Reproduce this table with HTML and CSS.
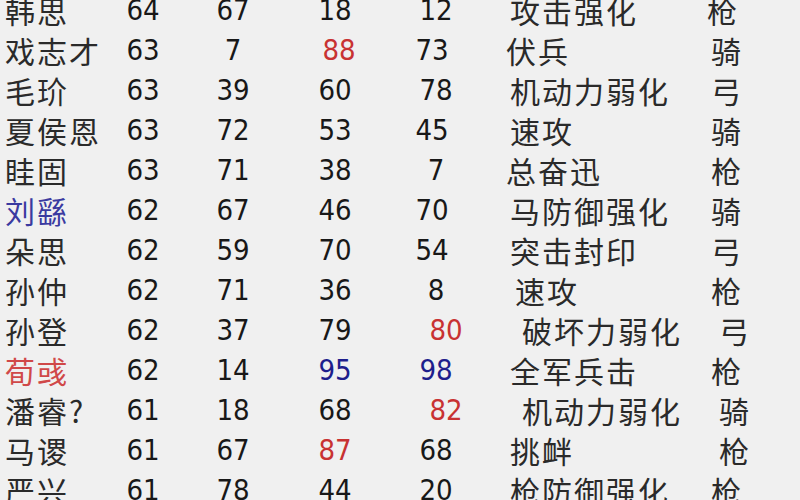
FILE: index.html
```html
<!DOCTYPE html>
<html lang="zh">
<head>
<meta charset="utf-8">
<title>武将一览</title>
<link rel="stylesheet" href="styles.css">
</head>
<body>
<div class="table">
  <div class="row"><span class="name">韩思</span><span class="n c2">64</span><span class="n c3">67</span><span class="n c4">18</span><span class="n c5">12</span><span class="skill">攻击强化</span><span class="type">枪</span></div>
  <div class="row"><span class="name">戏志才</span><span class="n c2">63</span><span class="n c3">7</span><span class="n c4 red sr">88</span><span class="n c5 sl">73</span><span class="skill sk-l">伏兵</span><span class="type t1">骑</span></div>
  <div class="row"><span class="name">毛玠</span><span class="n c2">63</span><span class="n c3">39</span><span class="n c4">60</span><span class="n c5">78</span><span class="skill">机动力弱化</span><span class="type t1">弓</span></div>
  <div class="row"><span class="name">夏侯恩</span><span class="n c2">63</span><span class="n c3">72</span><span class="n c4">53</span><span class="n c5 sl">45</span><span class="skill">速攻</span><span class="type t1">骑</span></div>
  <div class="row"><span class="name">眭固</span><span class="n c2">63</span><span class="n c3">71</span><span class="n c4">38</span><span class="n c5">7</span><span class="skill sk-l">总奋迅</span><span class="type t1">枪</span></div>
  <div class="row"><span class="name blue-name">刘繇</span><span class="n c2">62</span><span class="n c3">67</span><span class="n c4">46</span><span class="n c5 sl">70</span><span class="skill">马防御强化</span><span class="type t1">骑</span></div>
  <div class="row"><span class="name">朵思</span><span class="n c2">62</span><span class="n c3">59</span><span class="n c4">70</span><span class="n c5 sl">54</span><span class="skill">突击封印</span><span class="type t1">弓</span></div>
  <div class="row"><span class="name">孙仲</span><span class="n c2">62</span><span class="n c3">71</span><span class="n c4">36</span><span class="n c5">8</span><span class="skill sk-s">速攻</span><span class="type t1">枪</span></div>
  <div class="row"><span class="name">孙登</span><span class="n c2">62</span><span class="n c3">37</span><span class="n c4">79</span><span class="n c5 red sr2">80</span><span class="skill sk-r">破坏力弱化</span><span class="type t2">弓</span></div>
  <div class="row"><span class="name red-name">荀彧</span><span class="n c2">62</span><span class="n c3">14</span><span class="n c4 blue">95</span><span class="n c5 blue">98</span><span class="skill">全军兵击</span><span class="type t1">枪</span></div>
  <div class="row"><span class="name">潘睿?</span><span class="n c2">61</span><span class="n c3">18</span><span class="n c4">68</span><span class="n c5 red sr2">82</span><span class="skill sk-r">机动力弱化</span><span class="type t2">骑</span></div>
  <div class="row"><span class="name">马谡</span><span class="n c2">61</span><span class="n c3">67</span><span class="n c4 red">87</span><span class="n c5">68</span><span class="skill">挑衅</span><span class="type t2">枪</span></div>
  <div class="row"><span class="name">严兴</span><span class="n c2">61</span><span class="n c3">78</span><span class="n c4">44</span><span class="n c5">20</span><span class="skill">枪防御强化</span><span class="type t1">枪</span></div>
</div>
</body>
</html>
```

FILE: styles.css
```css
html, body {
  margin: 0;
  padding: 0;
  background: #f0f0f0;
  width: 800px;
  height: 500px;
  overflow: hidden;
}

.table {
  margin-top: -10px;
  padding-left: 5px;
  display: flex;
  flex-direction: column;
  color: #202020;
}

.row {
  display: grid;
  grid-template-columns: 93px 90px 90px 114px 88px 227px 1fr;
  height: 40px;
  align-items: center;
}

.name, .skill, .type {
  font-family: "Noto Sans CJK SC", "DejaVu Sans", sans-serif;
  font-size: 30px;
  letter-spacing: 2px;
  line-height: 40px;
  color: #2a2a2a;
  white-space: nowrap;
}

.n {
  font-family: "DejaVu Sans Condensed", "DejaVu Sans", sans-serif;
  font-stretch: condensed;
  font-size: 29px;
  line-height: 40px;
  text-align: center;
  color: #181818;
}

.sr { padding-left: 8px; }
.sl { padding-right: 8px; }
.sr2 { padding-left: 20px; }

.skill { padding-left: 30px; }
.sk-l { padding-left: 26px; }
.sk-s { padding-left: 35px; }
.sk-r { padding-left: 42px; }

.type { padding-left: 0; }
.t1 { padding-left: 4px; }
.t2 { padding-left: 12px; }

.red { color: #c83232; }
.blue { color: #1e1e8c; }
.blue-name { color: #3a3aa0; }
.red-name { color: #d04848; }
```
